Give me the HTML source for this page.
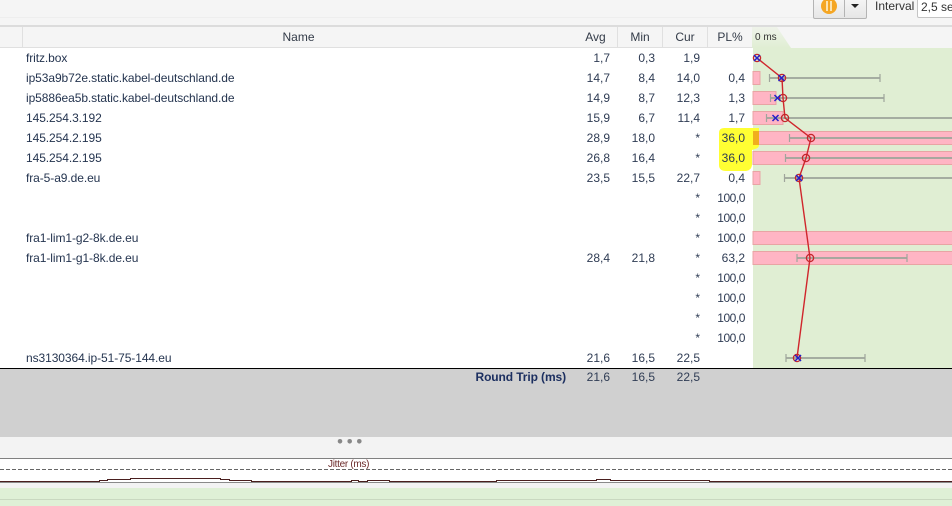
<!DOCTYPE html>
<html><head><meta charset="utf-8">
<style>
html,body{margin:0;padding:0;background:#fff}
#p{position:relative;width:952px;height:506px;overflow:hidden;background:#fff;font-family:"Liberation Sans",sans-serif;font-size:12px;color:#2f3c54}
#p div{position:absolute}
.r{white-space:nowrap;line-height:20px;height:20px;text-align:right}
.n{white-space:nowrap;line-height:20px;height:20px;left:26px;color:#24344f;letter-spacing:-.08px}
.h{top:27px;height:20px;line-height:20px;text-align:center;background:#f5f5f5;border-right:1px solid #e0e0e0;color:#333b48}
.a{left:570px;width:40px}.b{left:615px;width:40px}.c{left:660px;width:40px}.d{left:705px;width:40px}
.w{letter-spacing:-.45px}
</style></head><body>
<div id="p">
<div style="left:0;top:0;width:952px;height:25px;background:#f5f5f5"></div>
<div style="left:0;top:17px;width:813px;height:1px;background:#eeeeee"></div>
<div style="left:0;top:25px;width:952px;height:2px;background:#dcdcdc"></div>
<div style="left:813px;top:-3px;width:52px;height:20px;background:linear-gradient(#f6f6f6,#e6e6e6);border:1px solid #b4b4b4;border-radius:2px"></div>
<div style="left:844px;top:0;width:1px;height:17px;background:#b4b4b4"></div>
<div style="left:821px;top:-2px;width:16px;height:16px;border-radius:50%;background:#f5a623"></div>
<div style="left:826px;top:1px;width:2px;height:10px;background:#fce3b0"></div>
<div style="left:830px;top:1px;width:2px;height:10px;background:#fce3b0"></div>
<div style="left:851px;top:4px;width:0;height:0;border-left:4px solid transparent;border-right:4px solid transparent;border-top:4px solid #222"></div>
<div style="left:875px;top:-4px;line-height:20px;color:#333;white-space:nowrap">Interval</div>
<div style="left:917px;top:-3px;width:50px;height:19px;background:#fff;border:1px solid #c4c4c4;border-radius:2px"></div>
<div style="left:921px;top:-3px;line-height:20px;color:#333;white-space:nowrap">2,5 sec</div>

<div style="left:0;top:27px;width:952px;height:21px;background:#f5f5f5"></div>
<div style="left:0;top:47px;width:753px;height:1px;background:#e0e0e0"></div>
<div class="h" style="left:22px;width:551px;border-left:1px solid #e0e0e0">Name</div>
<div class="h" style="left:574px;width:43px">Avg</div>
<div class="h" style="left:618px;width:44px">Min</div>
<div class="h" style="left:663px;width:44px">Cur</div>
<div class="h" style="left:708px;width:44px">PL%</div>

<div style="left:753px;top:48px;width:199px;height:320px;background:#e0eed3"></div>
<div style="left:0;top:0;width:952px;height:506px">
<svg width="952" height="506" style="position:absolute;left:0;top:0">
<defs><linearGradient id="t" x1="0" y1="0" x2="0" y2="1"><stop offset="0" stop-color="#eff3ea"/><stop offset="1" stop-color="#e0eed3"/></linearGradient></defs>
<polygon points="752,27 777,27 791,48 752,48" fill="url(#t)"/>
<g fill="#ffb5c4" stroke="#e8a4a4" stroke-width="1">
<rect x="753" y="71.500" width="7" height="13"/>
<rect x="753" y="91.500" width="23" height="13"/>
<rect x="753" y="111.500" width="30" height="13"/>
<rect x="753" y="131.500" width="201" height="13"/>
<rect x="753" y="151.500" width="201" height="13"/>
<rect x="753" y="171.500" width="7" height="13"/>
<rect x="753" y="231.500" width="201" height="13"/>
<rect x="753" y="251.500" width="201" height="13"/>
</g>
<path d="M719 133Q719 128 724 128H759V145Q759 148 755 149L752 150V164Q752 170 746 171H726Q719 171 719 165Z" fill="#ffff33"/>
<rect x="753" y="131" width="6" height="14" fill="#f0ae1e"/>
<g stroke="#9fa59b" stroke-width="2" fill="none" opacity=".9">
<path d="M769 78H880M770 98H884M766 118H952M789 138H952M785 158H952M784 178H952M797 258H907M786 358H865"/>
</g>
<g stroke="#9fa59b" stroke-width="1.200" fill="none">
<path d="M769.500 74V82M880 74V82M770.500 94V102M884 94V102M766.500 114V122M789.500 134V142M785.500 154V162M784.500 174V182M797 254V262M907 254V262M786 354V362M865 354V362"/>
</g>
<polyline points="757,58 782,78 783,98 785,118 811,138 806,158 799,178 810,258 797,358" fill="none" stroke="#d0252c" stroke-width="1.400"/>
<g fill="none" stroke="#c4262c" stroke-width="1.300">
<circle cx="757" cy="58" r="3.600"/><circle cx="782" cy="78" r="3.600"/><circle cx="783" cy="98" r="3.600"/><circle cx="785" cy="118" r="3.600"/><circle cx="811" cy="138" r="3.600"/><circle cx="806" cy="158" r="3.600"/><circle cx="799" cy="178" r="3.600"/><circle cx="810" cy="258" r="3.600"/><circle cx="797" cy="358" r="3.600"/>
</g>
<g fill="none" stroke="#2420c8" stroke-width="1.500">
<path d="M754 55l6 6m0-6l-6 6M778.500 75l6 6m0-6l-6 6M774.500 95l6 6m0-6l-6 6M772.500 115l6 6m0-6l-6 6M796 175l6 6m0-6l-6 6M795 355l6 6m0-6l-6 6"/>
</g>
<rect x="0" y="368" width="952" height="1" fill="#000"/>
<rect x="0" y="369" width="952" height="68" fill="#d0d0d0"/>
<rect x="0" y="437" width="952" height="21" fill="#f3f3f3"/>
<circle cx="340" cy="441.300" r="2.300" fill="#888"/><circle cx="349.700" cy="441.300" r="2.300" fill="#888"/><circle cx="359.300" cy="441.300" r="2.300" fill="#888"/>
<rect x="0" y="458" width="952" height="1" fill="#808080"/>
<line x1="0" y1="469.500" x2="952" y2="469.500" stroke="#666" stroke-width="1" stroke-dasharray="4 2"/>
<rect x="0" y="482" width="952" height="1" fill="#8a8a8a"/>
<polyline points="0,481.500 99.500,481.500 99.500,480.500 107.500,480.500 107.500,479.500 130.500,479.500 130.500,478.500 220.500,478.500 220.500,479.500 229.500,479.500 229.500,480.500 251.500,480.500 251.500,481.500 351.500,481.500 351.500,480.500 358.500,480.500 358.500,481.500 367.500,481.500 367.500,480.500 389.500,480.500 389.500,481.500 496.500,481.500 496.500,480.500 596.500,480.500 596.500,479.500 610.500,479.500 610.500,480.500 709.500,480.500 709.500,481.500 952,481.500" fill="none" stroke="#4a1f1f" stroke-width="1"/>
<rect x="0" y="483" width="952" height="5" fill="#f3f3f3"/>
<rect x="0" y="488" width="952" height="18" fill="#dff0d6"/>
<rect x="0" y="499" width="952" height="1" fill="#c9d8c0"/>
</svg>
</div>

<div class="n" style="top:48px">fritz.box</div>
<div class="n" style="top:68px">ip53a9b72e.static.kabel-deutschland.de</div>
<div class="n" style="top:88px">ip5886ea5b.static.kabel-deutschland.de</div>
<div class="n" style="top:108px">145.254.3.192</div>
<div class="n" style="top:128px">145.254.2.195</div>
<div class="n" style="top:148px">145.254.2.195</div>
<div class="n" style="top:168px">fra-5-a9.de.eu</div>
<div class="n" style="top:228px">fra1-lim1-g2-8k.de.eu</div>
<div class="n" style="top:248px">fra1-lim1-g1-8k.de.eu</div>
<div class="n" style="top:348px">ns3130364.ip-51-75-144.eu</div>

<div class="r a" style="top:48px">1,7</div><div class="r b" style="top:48px">0,3</div><div class="r c" style="top:48px">1,9</div>
<div class="r a" style="top:68px">14,7</div><div class="r b" style="top:68px">8,4</div><div class="r c" style="top:68px">14,0</div><div class="r d" style="top:68px">0,4</div>
<div class="r a" style="top:88px">14,9</div><div class="r b" style="top:88px">8,7</div><div class="r c" style="top:88px">12,3</div><div class="r d" style="top:88px">1,3</div>
<div class="r a" style="top:108px">15,9</div><div class="r b" style="top:108px">6,7</div><div class="r c" style="top:108px">11,4</div><div class="r d" style="top:108px">1,7</div>
<div class="r a" style="top:128px">28,9</div><div class="r b" style="top:128px">18,0</div><div class="r c" style="top:128px">*</div><div class="r d" style="top:128px">36,0</div>
<div class="r a" style="top:148px">26,8</div><div class="r b" style="top:148px">16,4</div><div class="r c" style="top:148px">*</div><div class="r d" style="top:148px">36,0</div>
<div class="r a" style="top:168px">23,5</div><div class="r b" style="top:168px">15,5</div><div class="r c" style="top:168px">22,7</div><div class="r d" style="top:168px">0,4</div>
<div class="r c" style="top:188px">*</div><div class="r d w" style="top:188px">100,0</div>
<div class="r c" style="top:208px">*</div><div class="r d w" style="top:208px">100,0</div>
<div class="r c" style="top:228px">*</div><div class="r d w" style="top:228px">100,0</div>
<div class="r a" style="top:248px">28,4</div><div class="r b" style="top:248px">21,8</div><div class="r c" style="top:248px">*</div><div class="r d" style="top:248px">63,2</div>
<div class="r c" style="top:268px">*</div><div class="r d w" style="top:268px">100,0</div>
<div class="r c" style="top:288px">*</div><div class="r d w" style="top:288px">100,0</div>
<div class="r c" style="top:308px">*</div><div class="r d w" style="top:308px">100,0</div>
<div class="r c" style="top:328px">*</div><div class="r d w" style="top:328px">100,0</div>
<div class="r a" style="top:348px">21,6</div><div class="r b" style="top:348px">16,5</div><div class="r c" style="top:348px">22,5</div>

<div class="r" style="left:400px;width:166px;top:367px;font-weight:bold;color:#1c2f60;letter-spacing:-.1px">Round Trip (ms)</div>
<div class="r a" style="top:367px">21,6</div><div class="r b" style="top:367px">16,5</div><div class="r c" style="top:367px">22,5</div>

<div style="left:755px;top:28px;line-height:20px;font-size:10px;color:#333;white-space:nowrap">0 ms</div>
<div style="left:328px;top:455px;line-height:20px;font-size:10px;color:#6b2a2a;white-space:nowrap;letter-spacing:-.3px">Jitter (ms)</div>
</div>
</body></html>
